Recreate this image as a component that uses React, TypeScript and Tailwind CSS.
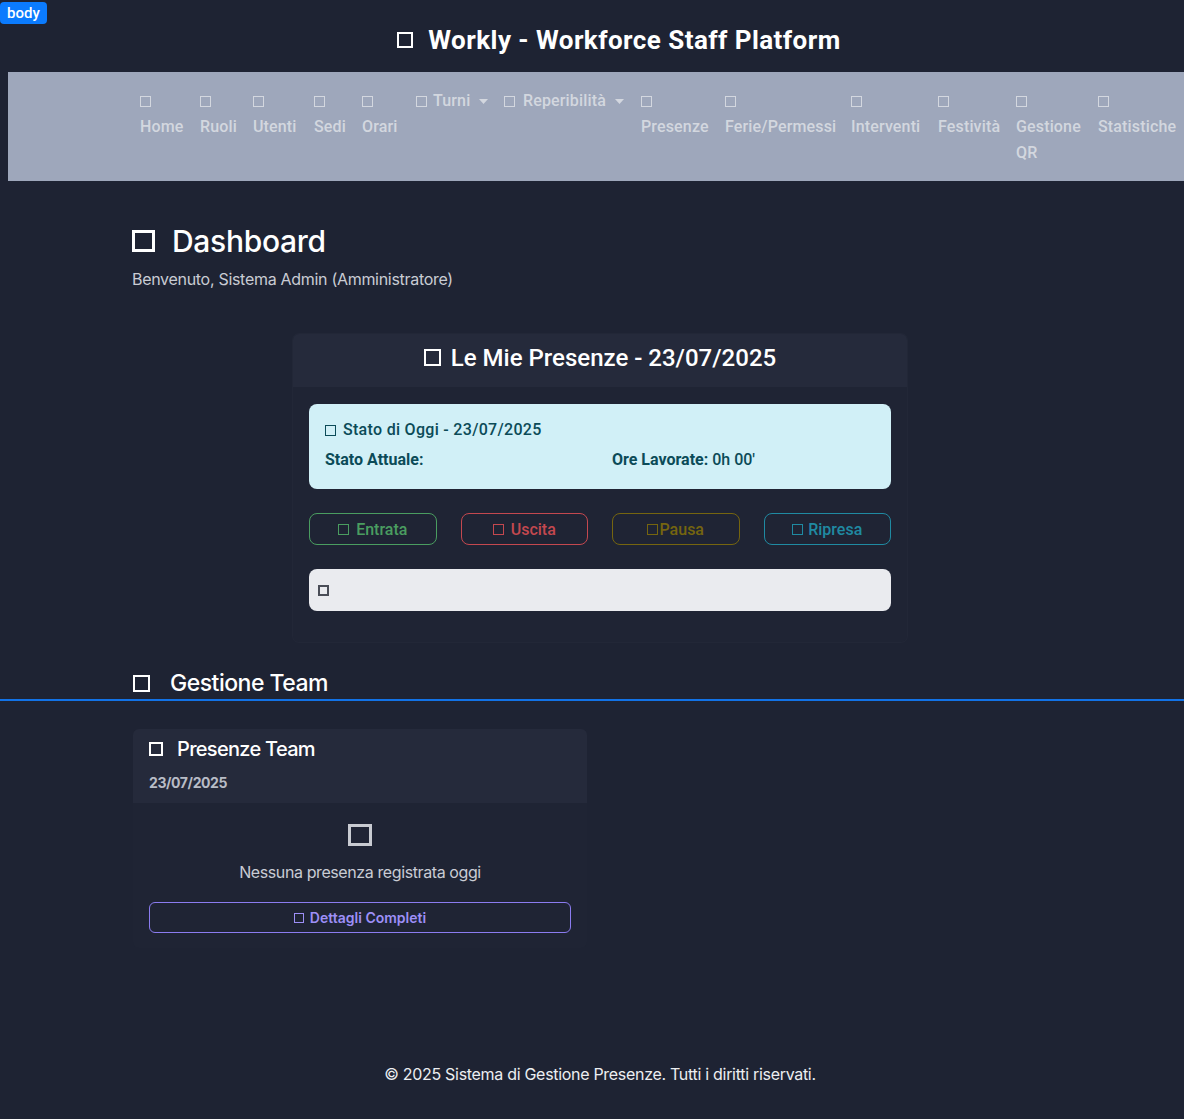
import React from "react";

const Sq = ({ cls }: { cls: string }) => <span className={"inline-block shrink-0 " + cls} />;

const Caret = () => (
  <svg width="9" height="5" viewBox="0 0 9 5" className="ml-[9px] inline-block">
    <path d="M0 0h9L4.5 5z" fill="currentColor" />
  </svg>
);

export default function App() {
  const roboto = { fontFamily: "Roboto, 'Liberation Sans', sans-serif" };
  const inter = { fontFamily: "Inter, 'Liberation Sans', sans-serif" };
  const NavItem = ({ children, w }: { children: React.ReactNode; w: string }) => (
    <div className={"flex flex-col pl-2 leading-[26px] shrink-0 whitespace-nowrap " + w}>
      <span className="h-[26px] flex items-center">
        <Sq cls="w-[11px] h-[11px] border-[1.5px] border-[#d3d7df]" />
      </span>
      <span>{children}</span>
    </div>
  );
  return (
    <div className="relative min-h-[1119px] bg-[#1e2333] text-white overflow-hidden" style={inter}>
      <div className="absolute left-0 top-[2px] rounded-[4px] bg-[#0b7bfe] px-[7px] h-[22px] flex items-center text-[15px] font-medium text-white" style={roboto}>
        body
      </div>

      <div className="pt-[24px] pb-[16px] flex justify-center items-center pl-[54px]" style={roboto}>
        <Sq cls="w-[16px] h-[16px] border-2 border-white mr-[15px]" />
        <h1 className="text-[26px] leading-[32px] font-bold tracking-[0.45px]">Workly - Workforce Staff Platform</h1>
      </div>

      <nav className="ml-2 bg-[#9ea7bb] text-[#d3d7df] text-[16px] font-medium tracking-[0.15px] pt-[16px] pb-[15px] pl-[124px] flex" style={roboto}>
        <NavItem w="w-[60px]">Home</NavItem>
        <NavItem w="w-[53px]">Ruoli</NavItem>
        <NavItem w="w-[61px]">Utenti</NavItem>
        <NavItem w="w-[48px]">Sedi</NavItem>
        <NavItem w="w-[54px]">Orari</NavItem>
        <div className="pl-2 w-[88px] shrink-0 h-[26px] flex items-center">
          <Sq cls="w-[11px] h-[11px] border-[1.5px] border-[#d3d7df] mr-[6px]" />
          Turni
          <Caret />
        </div>
        <div className="pl-2 w-[137px] shrink-0 h-[26px] flex items-center">
          <Sq cls="w-[11px] h-[11px] border-[1.5px] border-[#d3d7df] mr-[8px]" />
          Reperibilità
          <Caret />
        </div>
        <NavItem w="w-[84px]">Presenze</NavItem>
        <NavItem w="w-[126px]">Ferie/Permessi</NavItem>
        <NavItem w="w-[87px]">Interventi</NavItem>
        <NavItem w="w-[78px]">Festività</NavItem>
        <NavItem w="w-[82px]">
          Gestione
          <br />
          QR
        </NavItem>
        <NavItem w="w-[96px]">Statistiche</NavItem>
      </nav>

      <main className="pl-[132px] w-[1068px]">
        <div className="pt-[41px] flex items-center h-[79px]">
          <Sq cls="w-[23px] h-[22px] border-[3px] border-white mr-[17px]" />
          <h2 className="text-[30px] leading-[38px] font-medium tracking-[-0.3px]">Dashboard</h2>
        </div>
        <p className="mt-[7px] text-[16px] leading-[24px] text-[#c9ccd4] tracking-[-0.3px]">Benvenuto, Sistema Admin (Amministratore)</p>

        <section className="mt-[43px] mx-auto w-[614px] bg-[#1f2434] rounded-[6px] overflow-hidden shadow-[0_0_0_1px_rgba(255,255,255,0.02)]" style={roboto}>
          <div className="h-[53px] bg-[#252a3b] flex items-center justify-center pb-[6px]">
            <Sq cls="w-[17px] h-[17px] border-2 border-white mr-[10px]" />
            <h3 className="text-[24px] font-medium">Le Mie Presenze - 23/07/2025</h3>
          </div>
          <div className="p-4 pt-[17px] pb-[31px]">
            <div className="bg-[#d1f0f7] rounded-[8px] h-[85px] px-4 pt-[16px] text-[#0b4b58] text-[16px]">
              <div className="flex items-center leading-[20px] font-medium tracking-[0.3px]">
                <Sq cls="w-[11px] h-[11px] border-[1.5px] border-[#0b4b58] mr-[7px]" />
                Stato di Oggi - 23/07/2025
              </div>
              <div className="grid grid-cols-2 gap-x-6 mt-[10px] leading-[20px]">
                <div className="font-bold">Stato Attuale:</div>
                <div>
                  <span className="font-bold">Ore Lavorate:</span> <span className="font-medium">0h 00'</span>
                </div>
              </div>
            </div>

            <div className="grid grid-cols-4 gap-6 mt-[24px] text-[16px] font-medium">
              <button className="h-[32px] rounded-[8px] border border-[#4a9d60] text-[#4a9d60] flex items-center justify-center pt-[1px]">
                <Sq cls="w-[11px] h-[11px] border-[1.5px] border-[#4a9d60] mr-[7px]" />
                Entrata
              </button>
              <button className="h-[32px] rounded-[8px] border border-[#c4484f] text-[#c4484f] flex items-center justify-center pt-[1px]">
                <Sq cls="w-[11px] h-[11px] border-[1.5px] border-[#c4484f] mr-[7px]" />
                Uscita
              </button>
              <button className="h-[32px] rounded-[8px] border border-[#75650f] text-[#75650f] flex items-center justify-center pt-[1px]">
                <Sq cls="w-[11px] h-[11px] border-[1.5px] border-[#75650f] mr-[1px]" />
                Pausa
              </button>
              <button className="h-[32px] rounded-[8px] border border-[#1f8aa2] text-[#1f8aa2] flex items-center justify-center pt-[1px]">
                <Sq cls="w-[11px] h-[11px] border-[1.5px] border-[#1f8aa2] mr-[5px]" />
                Ripresa
              </button>
            </div>

            <div className="mt-[24px] h-[42px] bg-[#eaebef] rounded-[8px] flex items-center pl-[9px]">
              <Sq cls="w-[11px] h-[11px] border-2 border-[#4a4d57]" />
            </div>
          </div>
        </section>
      </main>

      <div className="mt-[26px] border-b-2 border-[#1272e6]">
        <div className="pl-[133px] flex items-center h-[31px]">
          <Sq cls="w-[17px] h-[17px] border-[2.5px] border-white mr-[20px]" />
          <h2 className="text-[23px] leading-[29px] font-medium tracking-[-0.5px]">Gestione Team</h2>
        </div>
      </div>

      <div className="pl-[133px] pt-[28px]">
        <section className="w-[454px] bg-[#1f2434] rounded-[6px] overflow-hidden">
          <div className="bg-[#252a3b] h-[74px] px-4 pt-[8px]">
            <div className="flex items-center h-[24px]">
              <Sq cls="w-[14px] h-[14px] border-2 border-white mr-[14px]" />
              <h3 className="text-[20px] font-medium tracking-[-0.7px]">Presenze Team</h3>
            </div>
            <div className="mt-[11px] text-[14px] font-bold text-[#b8bcc6] tracking-[-0.4px]">23/07/2025</div>
          </div>
          <div className="px-4 pt-[21px] pb-[15px] flex flex-col items-center">
            <Sq cls="w-[24px] h-[22px] border-[3px] border-[#c8cbd1]" />
            <p className="mt-[14px] text-[16px] leading-[24px] text-[#c9ccd4] tracking-[-0.4px]">Nessuna presenza registrata oggi</p>
            <button className="mt-[18px] w-full h-[31px] rounded-[6px] border border-[#8b7cf0] text-[#9d8ff7] text-[14px] font-semibold flex items-center justify-center">
              <Sq cls="w-[10px] h-[10px] border-[1.5px] border-[#9d8ff7] mr-[6px]" />
              Dettagli Completi
            </button>
          </div>
        </section>
      </div>

      <footer className="absolute left-0 right-0 top-[1062px] text-center text-[16px] leading-[24px] text-[#eceef1] pl-[16px] tracking-[-0.3px]">
        © 2025 Sistema di Gestione Presenze. Tutti i diritti riservati.
      </footer>
    </div>
  );
}
